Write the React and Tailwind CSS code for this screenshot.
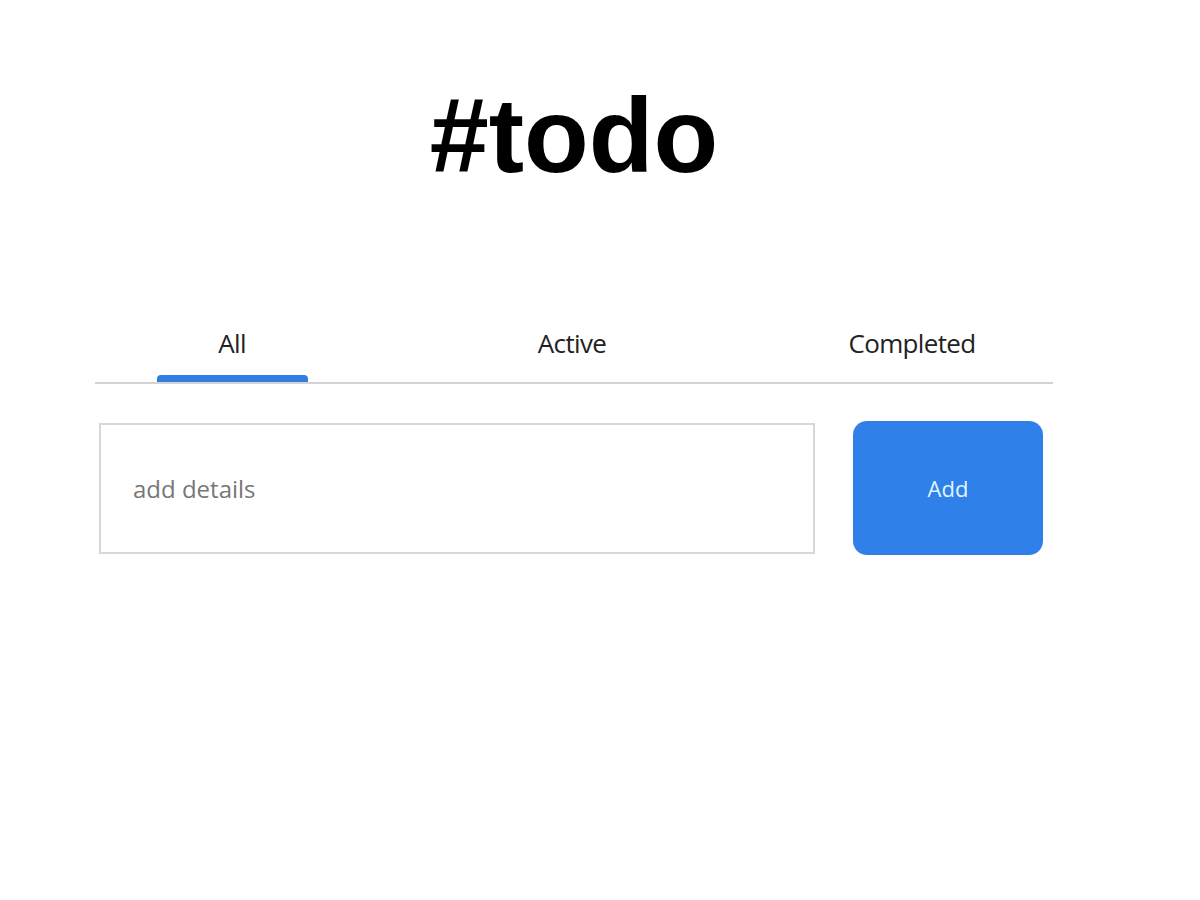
export default function App() {

  const tabs = ["All", "Active", "Completed"];

  return (

    <div className="min-h-[900px] bg-white font-['Open_Sans',sans-serif]">

      <div className="ml-[95px] w-[958px] pt-[70px]">

        <h1 className="text-center text-[106px] leading-[130px] font-bold tracking-normal text-black font-['Liberation_Sans',Arial,sans-serif]">
          #todo
        </h1>

        <div className="mt-[126px] border-b-2 border-[#d4d4d4]">

          <div className="grid grid-cols-3 -ml-[33px] w-[1020px]">

            {tabs.map((t, i) => (

              <div key={t} className="flex flex-col items-center">

                <span className="text-[26px] leading-[34px] text-[#222] tracking-tight">
                  {t}
                </span>

                <div
                  className={`mt-[15px] h-[7px] w-[151px] rounded-t-[4px] ${
                    i === 0 ? "bg-[#2f7fe0]" : "bg-transparent"
                  }`}
                />

              </div>

            ))}

          </div>

        </div>

        <div className="flex items-center mt-[37px] gap-[38px]">

          <input
            type="text"
            placeholder="add details"
            className="ml-[4px] w-[716px] h-[131px] border-2 border-[#d8d8d8] px-[32px] text-[24px] text-[#333] placeholder:text-[#777] outline-none"
          />

          <button className="w-[190px] h-[134px] rounded-[14px] bg-[#2f80e8] text-[22px] text-[#dff4ff]">
            Add
          </button>

        </div>

      </div>

    </div>

  );

}
